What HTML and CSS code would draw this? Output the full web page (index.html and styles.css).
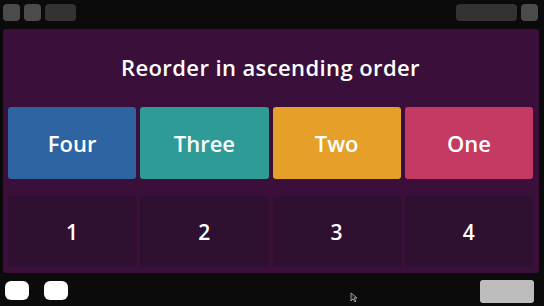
FILE: index.html
```html
<!DOCTYPE html>
<html lang="en">
<head>
    <meta charset="UTF-8">
    <meta name="viewport" content="width=device-width, initial-scale=1.0">
    <title>Reorder</title>
    <link rel="stylesheet" href="styles.css">
</head>
<body>

    <div class="top-bar">
        <div class="bar-group">
            <span class="pill pill-light"></span>
            <span class="pill pill-light"></span>
            <span class="pill pill-dark pill-wide"></span>
        </div>
        <div class="bar-group">
            <span class="pill pill-dark pill-long"></span>
            <span class="pill pill-light"></span>
        </div>
    </div>

    <div class="game-panel">
        <h1 class="prompt">Reorder in ascending order</h1>
        <div class="tile-row">
            <button class="word-tile blue">Four</button>
            <button class="word-tile teal">Three</button>
            <button class="word-tile orange">Two</button>
            <button class="word-tile pink">One</button>
        </div>
        <div class="slot-row">
            <div class="slot">1</div>
            <div class="slot">2</div>
            <div class="slot">3</div>
            <div class="slot">4</div>
        </div>
    </div>

    <div class="bottom-bar">
        <div class="bar-group wide-gap">
            <span class="key"></span>
            <span class="key"></span>
        </div>
        <span class="next-btn"></span>
    </div>

    <svg class="cursor" width="8" height="11" viewBox="0 0 8 11">
        <path d="M1 1 L1 9 L3 7 L5 10 L6 9 L4 6 L7 6 Z" fill="#222" stroke="#bbb" stroke-width="0.8"/>
    </svg>

</body>
</html>
```

FILE: styles.css
```css
/* page frame */
body {
    margin: 0;
    width: 544px;
    height: 306px;
    background-color: #0b0b0b;
    font-family: "Open Sans", "Noto Sans", sans-serif;
    position: relative;
    overflow: hidden;
}

.top-bar {
    display: flex;
    justify-content: space-between;
    padding: 4px 6px 0 3px;
    height: 25px;
    box-sizing: border-box;
}

.bar-group {
    display: flex;
    gap: 4px;
}

.bar-group.wide-gap {
    gap: 15px;
}

.pill {
    display: block;
    height: 17px;
    width: 17px;
    border-radius: 4px;
}

.pill-light {
    background-color: #4b4b4b;
}

.pill-dark {
    background-color: #333333;
}

.pill-wide {
    width: 31px;
}

.pill-long {
    width: 61px;
}

/* main panel */
.game-panel {
    margin: 4px 5px 0 3px;
    height: 244px;
    background-color: #3a0f3a;
    border-radius: 3px;
    padding: 0 6px 0 5px;
    box-sizing: border-box;
    display: flex;
    flex-direction: column;
}

.prompt {
    margin: 0;
    height: 78px;
    line-height: 76px;
    text-align: center;
    color: #ffffff;
    font-size: 22px;
    font-weight: 600;
    letter-spacing: 0.4px;
}

.tile-row,
.slot-row {
    display: grid;
    grid-template-columns: repeat(4, 1fr);
    gap: 4px;
}

.word-tile {
    height: 72px;
    border: none;
    border-radius: 3px;
    color: #ffffff;
    font-family: inherit;
    font-size: 22px;
    font-weight: 600;
    cursor: pointer;
    padding: 0;
}

.blue { background-color: #2d63a0; }
.teal { background-color: #2f9b96; }
.orange { background-color: #e6a02a; }
.pink { background-color: #c43a62; }

.slot-row {
    margin-top: 17px;
}

.slot {
    height: 71px;
    background-color: #301030;
    border-radius: 3px;
    color: #ffffff;
    font-size: 21px;
    font-weight: 600;
    display: flex;
    align-items: center;
    justify-content: center;
}

/* bottom controls */
.bottom-bar {
    display: flex;
    justify-content: space-between;
    padding: 8px 10px 0 5px;
}

.key {
    display: block;
    width: 24px;
    height: 19px;
    background-color: #ffffff;
    border-radius: 6px;
}

.next-btn {
    display: block;
    width: 54px;
    height: 23px;
    margin-top: -1px;
    background-color: #bdbdbd;
    border-radius: 3px;
}

.cursor {
    position: absolute;
    left: 350px;
    top: 292px;
}
```
